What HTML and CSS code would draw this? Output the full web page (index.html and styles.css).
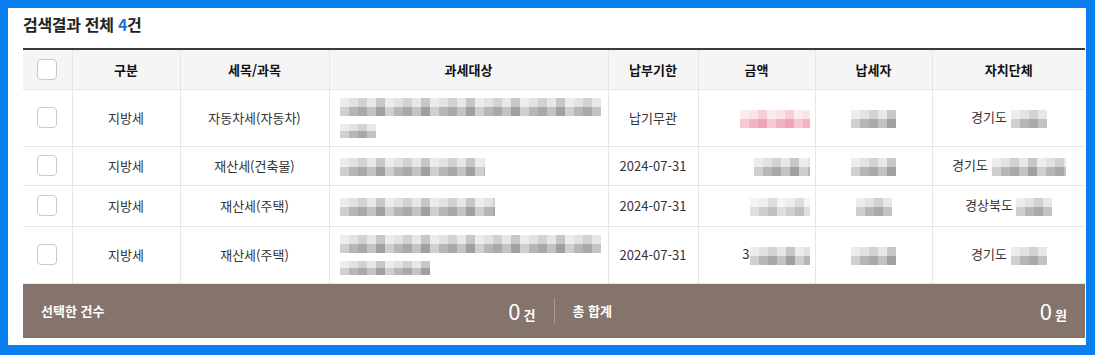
FILE: index.html
```html
<!DOCTYPE html>
<html lang="ko">
<head>
<meta charset="utf-8">
<title>검색결과</title>
<link rel="stylesheet" href="styles.css">
</head>
<body>
<div class="frame">
  <section class="panel">
    <h2 class="title">검색결과 전체 <em>4</em>건</h2>
    <table class="grid">
      <colgroup>
        <col class="c-chk"><col class="c-gubun"><col class="c-item"><col class="c-target"><col class="c-due"><col class="c-amt"><col class="c-payer"><col class="c-gov">
      </colgroup>
      <thead>
        <tr>
          <th><span class="chk"></span></th>
          <th>구분</th>
          <th>세목/과목</th>
          <th>과세대상</th>
          <th>납부기한</th>
          <th>금액</th>
          <th>납세자</th>
          <th>자치단체</th>
        </tr>
      </thead>
      <tbody>
        <tr class="tall">
          <td><span class="chk"></span></td>
          <td>지방세</td>
          <td>자동차세(자동차)</td>
          <td class="target"><div class="lines"><span class="mask w261"></span><span class="mask sm w36"></span></div></td>
          <td>납기무관</td>
          <td class="amt"><span class="mask pink w70"></span></td>
          <td><span class="mask w45"></span></td>
          <td>경기도 <span class="mask w36"></span></td>
        </tr>
        <tr>
          <td><span class="chk"></span></td>
          <td>지방세</td>
          <td>재산세(건축물)</td>
          <td class="target"><span class="mask w145"></span></td>
          <td>2024-07-31</td>
          <td class="amt"><span class="mask w56"></span></td>
          <td><span class="mask w45"></span></td>
          <td>경기도 <span class="mask w74"></span></td>
        </tr>
        <tr>
          <td><span class="chk"></span></td>
          <td>지방세</td>
          <td>재산세(주택)</td>
          <td class="target"><span class="mask w155"></span></td>
          <td>2024-07-31</td>
          <td class="amt"><span class="mask light w60"></span></td>
          <td><span class="mask w36"></span></td>
          <td>경상북도 <span class="mask w36"></span></td>
        </tr>
        <tr class="tall">
          <td><span class="chk"></span></td>
          <td>지방세</td>
          <td>재산세(주택)</td>
          <td class="target"><div class="lines"><span class="mask w261"></span><span class="mask sm w90"></span></div></td>
          <td>2024-07-31</td>
          <td class="amt">3<span class="mask w60"></span></td>
          <td><span class="mask w45"></span></td>
          <td>경기도 <span class="mask w36"></span></td>
        </tr>
      </tbody>
    </table>
    <div class="summary">
      <div class="sum-half">
        <span class="sum-label">선택한 건수</span>
        <span class="sum-value"><b>0</b>건</span>
      </div>
      <div class="sum-half">
        <span class="sum-label">총 합계</span>
        <span class="sum-value"><b>0</b>원</span>
      </div>
    </div>
  </section>
</div>
</body>
</html>
```

FILE: styles.css
```css
* { box-sizing: border-box; }
html, body { margin: 0; padding: 0; }
body {
  font-family: "Noto Sans CJK KR", "Noto Sans", sans-serif;
  background: #0a80f0;
  width: 1095px;
  height: 355px;
  overflow: hidden;
}
.frame {
  padding: 8px 9px 10px 8px;
  height: 355px;
}
.panel {
  background: #fff;
  height: 337px;
  padding: 5px 1px 7px 15px;
  display: flex;
  flex-direction: column;
}
.title {
  margin: 0 0 13px 0;
  font-size: 16px;
  line-height: 22px;
  font-weight: 700;
  color: #222;
  letter-spacing: -0.3px;
}
.title em {
  font-style: normal;
  color: #1f6fd6;
}
.grid {
  width: 1062px;
  table-layout: fixed;
  border-collapse: collapse;
  border-top: 2px solid #3a3a3a;
  font-size: 13px;
  color: #333;
}
.c-chk { width: 49px; }
.c-gubun { width: 108px; }
.c-item { width: 149px; }
.c-target { width: 279px; }
.c-due { width: 90px; }
.c-amt { width: 117px; }
.c-payer { width: 117px; }
.c-gov { width: 153px; }
.grid th, .grid td {
  border-bottom: 1px solid #e6e6e6;
  border-left: 1px solid #e6e6e6;
  text-align: center;
  vertical-align: middle;
  padding: 0 4px;
  white-space: nowrap;
}
.grid th:first-child, .grid td:first-child { border-left: 0; }
.grid th {
  background: #f5f5f5;
  height: 40px;
  font-weight: 700;
  color: #111;
}
.grid td {
  height: 40px;
  line-height: 19px;
}
.grid tr:nth-child(2) td { height: 39px; }
.grid tr:nth-child(3) td { height: 41px; }
.grid tr.tall td { height: 57px; }
.grid tr.tall:last-child td { height: 56px; }
.grid td.target {
  text-align: left;
  padding: 8px 10px;
}
.grid td.amt {
  text-align: right;
  padding-right: 5px;
}
.lines {
  display: flex;
  flex-direction: column;
  gap: 8px;
}
.chk {
  display: inline-block;
  width: 20px;
  height: 21px;
  border: 1px solid #c9c9c9;
  border-radius: 4px;
  background: #fff;
  vertical-align: middle;
}
.mask {
  display: inline-block;
  vertical-align: middle;
  height: 18px;
  background-image:
    repeating-linear-gradient(90deg, rgba(255,255,255,.35) 0 9px, rgba(0,0,0,0) 9px 18px, rgba(0,0,0,.07) 18px 27px, rgba(255,255,255,.18) 27px 36px, rgba(0,0,0,.12) 36px 45px),
    linear-gradient(#e3e2e3 0 50%, #b7b5b5 50% 100%);
}
.mask.sm { height: 14px; }
.mask.light {
  background-image:
    repeating-linear-gradient(90deg, rgba(255,255,255,.35) 0 9px, rgba(0,0,0,0) 9px 18px, rgba(0,0,0,.07) 18px 27px),
    linear-gradient(#efeeee 0 50%, #cfcdcd 50% 100%);
}
.mask.pink {
  background-image:
    repeating-linear-gradient(90deg, rgba(255,255,255,.3) 0 9px, rgba(0,0,0,0) 9px 18px, rgba(200,60,90,.12) 18px 27px),
    linear-gradient(#fbe3e8 0 50%, #f3b3c0 50% 100%);
}
.w36 { width: 36px; }
.w45 { width: 45px; }
.w56 { width: 56px; }
.w60 { width: 60px; }
.w70 { width: 70px; }
.w74 { width: 74px; }
.w90 { width: 90px; }
.w145 { width: 145px; }
.w155 { width: 155px; }
.w261 { width: 261px; }
.summary {
  width: 1062px;
  height: 55px;
  background: #85746c;
  display: flex;
  align-items: center;
  color: #fff;
}
.sum-half {
  flex: 1;
  display: flex;
  align-items: center;
  justify-content: space-between;
  padding: 0 18px;
  height: 26px;
}
.sum-half + .sum-half {
  border-left: 1px solid rgba(255,255,255,.28);
}
.sum-label {
  font-size: 13px;
  font-weight: 700;
}
.sum-value {
  font-size: 13px;
  font-weight: 700;
  display: flex;
  align-items: baseline;
  gap: 3px;
}
.sum-value b {
  font-size: 22px;
  font-weight: 400;
  line-height: 26px;
}
```
